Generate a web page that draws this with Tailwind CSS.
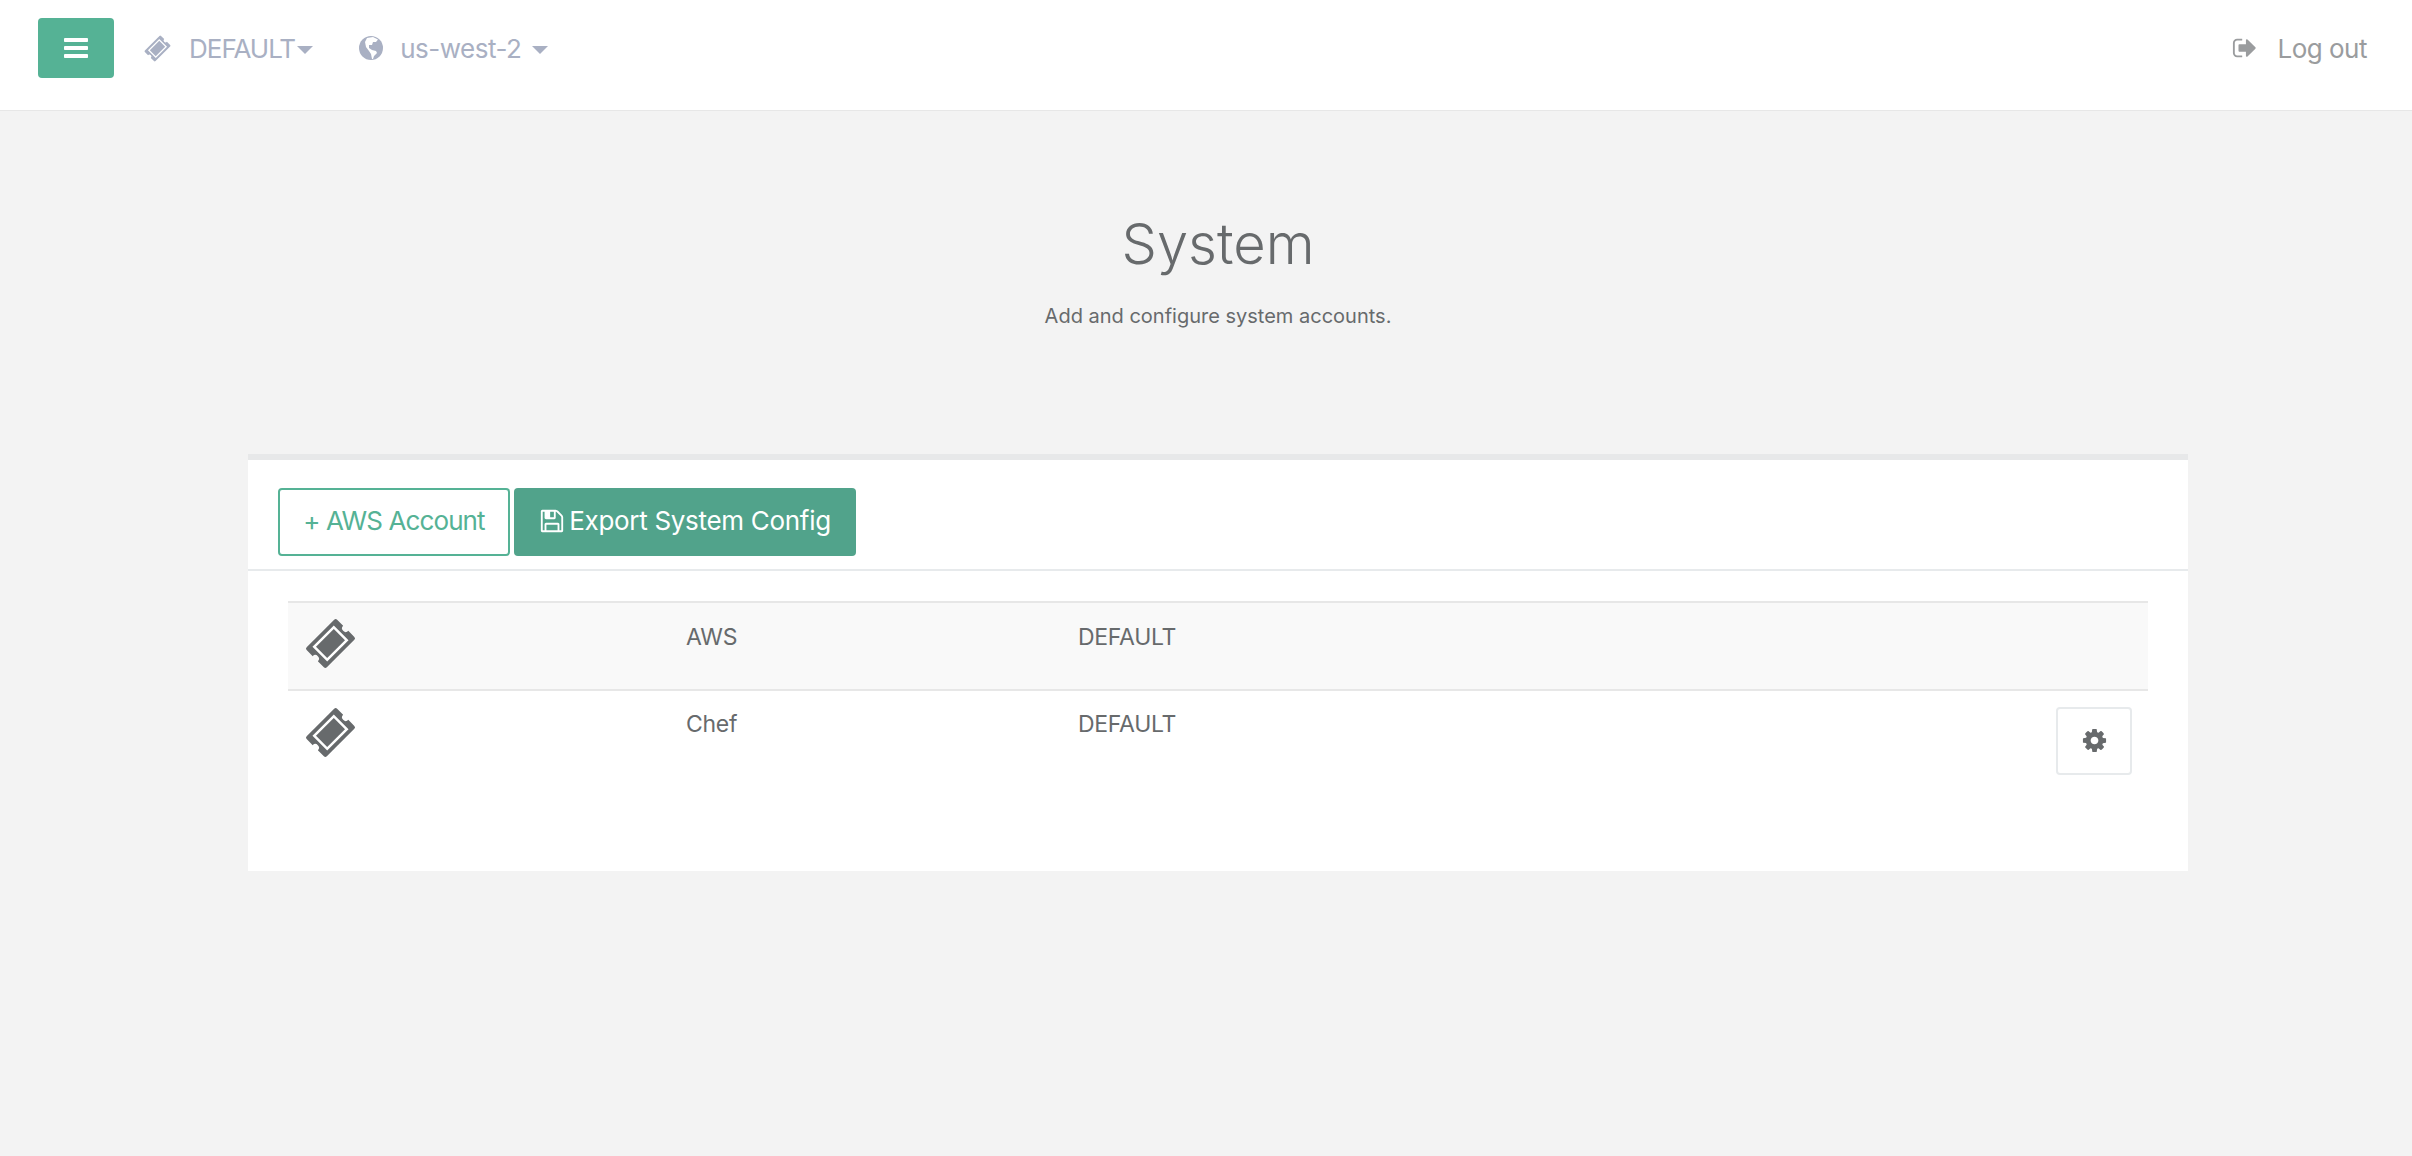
<!DOCTYPE html>
<html lang="en">
  <head>
    <meta charset="UTF-8" />
    <title>System</title>
    <script src="https://cdn.jsdelivr.net/npm/@tailwindcss/browser@4"></script>
  </head>
  <body class="bg-[#f3f3f3] min-h-screen font-['Inter',sans-serif] text-[#676a6c]">
    <!-- top nav -->
    <nav class="h-[111px] bg-white border-b border-[#e7e7e7] flex items-center justify-between pl-[38px] pr-[45px] pb-[14px]">
      <div class="flex items-center text-[#a9b0c3] text-[26px] tracking-[-0.5px]">
        <button class="w-[76px] h-[60px] rounded-[4px] bg-[#55b295] flex items-center justify-center">
          <svg class="w-[24px] h-[20px]" viewBox="128 256 1536 1280" preserveAspectRatio="none" fill="#fff"><path d="M1664 1344v128q0 26-19 45t-45 19h-1408q-26 0-45-19t-19-45v-128q0-26 19-45t45-19h1408q26 0 45 19t19 45zm0-512v128q0 26-19 45t-45 19h-1408q-26 0-45-19t-19-45v-128q0-26 19-45t45-19h1408q26 0 45 19t19 45zm0-512v128q0 26-19 45t-45 19h-1408q-26 0-45-19t-19-45v-128q0-26 19-45t45-19h1408q26 0 45 19t19 45z"/></svg>
        </button>
        <svg class="w-[27px] h-[27px] ml-[30px]" viewBox="0 0 49 49">
          <g transform="rotate(-45 24.5 24.5)">
            <path fill="#a9b0c3" d="M5.8 10.8h37.4a2 2 0 0 1 2 2v8.2a3.5 3.5 0 0 0 0 7v8.2a2 2 0 0 1-2 2H5.8a2 2 0 0 1-2-2V28a3.5 3.5 0 0 0 0-7v-8.2a2 2 0 0 1 2-2z"/>
            <rect x="11.2" y="15.7" width="26.6" height="17.6" fill="none" stroke="#fff" stroke-width="2.4"/>
          </g>
        </svg>
        <span class="ml-[18px] tracking-[-1px]">DEFAULT</span>
        <span class="ml-[2px] mt-[3px] border-x-[8px] border-x-transparent border-t-[8px] border-t-[#a9b0c3]"></span>
        <svg class="w-[24px] h-[24px] ml-[46px]" viewBox="0 0 24 24"><circle cx="12" cy="12" r="12" fill="#a9b0c3"/><path d="M8 2l6-1 5 2.5-2 2.5-3 0-1 3-3 0 0 3 3 2 4 1 1 2-3 3-1 3-1 0-1-5-2-3-3-4-1-5z" fill="#fff"/></svg>
        <span class="ml-[17px]">us-west-2</span>
        <span class="ml-[11px] mt-[3px] border-x-[8px] border-x-transparent border-t-[8px] border-t-[#a9b0c3]"></span>
      </div>
      <a class="flex items-center text-[#9a9c9e] text-[26px] tracking-[-0.5px]">
        <svg class="w-[26px] h-[26px] mr-[19px]" viewBox="0 0 1792 1792" fill="#9a9c9e"><path d="M704 1440q0 4 1 20t.5 26.5-3 23.5-10 19.5-20.5 6.5h-320q-119 0-203.5-84.5t-84.5-203.5v-704q0-119 84.5-203.5t203.5-84.5h320q13 0 22.5 9.5t9.5 22.5q0 4 1 20t.5 26.5-3 23.5-10 19.5-20.5 6.5h-320q-66 0-113 47t-47 113v704q0 66 47 113t113 47h312l11.5 1 11.5 3 8 5.5 7 9 2 13.5zm928-544q0 26-19 45l-544 544q-19 19-45 19t-45-19-19-45v-288h-448q-26 0-45-19t-19-45v-384q0-26 19-45t45-19h448v-288q0-26 19-45t45-19 45 19l544 544q19 19 19 45z"/></svg>
        Log out
      </a>
    </nav>

    <!-- heading -->
    <header class="ml-[248px] w-[1940px] h-[343px] pt-[98px] text-center">
      <h1 class="text-[56px] leading-[70px] font-light">System</h1>
      <p class="mt-[23px] text-[20px] leading-[28px]">Add and configure system accounts.</p>
    </header>

    <!-- panel -->
    <section class="ml-[248px] w-[1940px] h-[417px] bg-white border-t-[6px] border-[#e7e8e9]">
      <div class="h-[111px] border-b-2 border-[#e7eaec] pt-[28px] pl-[30px] flex items-start text-[26px] tracking-[-0.3px]">
        <button class="w-[232px] h-[68px] pb-[3px] rounded-[4px] border-2 border-[#55b295] text-[#55b295] bg-white tracking-[-0.9px]">+ AWS Account</button>
        <button class="ml-[4px] w-[342px] h-[68px] pb-[3px] rounded-[4px] bg-[#51a38b] text-white flex items-center justify-center">
          <svg class="w-[26px] h-[26px] mr-[4px]" viewBox="0 0 1792 1792" fill="#fff"><path d="M512 1536h768v-384h-768v384zm896 0h128v-896q0-14-10-38.5t-20-34.5l-281-281q-10-10-34-20t-39-10v416q0 40-28 68t-68 28h-576q-40 0-68-28t-28-68v-416h-128v1280h128v-416q0-40 28-68t68-28h832q40 0 68 28t28 68v416zm-384-928v-320q0-13-9.5-22.5t-22.5-9.5h-192q-13 0-22.5 9.5t-9.5 22.5v320q0 13 9.5 22.5t22.5 9.5h192q13 0 22.5-9.5t9.5-22.5zm640 32v928q0 40-28 68t-68 28h-1344q-40 0-68-28t-28-68v-1344q0-40 28-68t68-28h928q40 0 88 20t76 48l280 280q28 28 48 76t20 88z"/></svg>
          Export System Config
        </button>
      </div>
      <div class="mt-[30px] mx-[40px] text-[23px] tracking-[-0.3px] leading-[32px]">
        <div class="h-[90px] bg-[#f9f9f9] border-y-2 border-[#e7e7e7] grid grid-cols-[381px_392px_1fr] pl-[17px]">
          <svg class="w-[51px] h-[51px] mt-[15px]" viewBox="0 0 49 49">
            <g transform="rotate(-45 24.5 24.5)">
              <path fill="#676a6c" d="M5.8 10.8h37.4a2 2 0 0 1 2 2v8.2a3.5 3.5 0 0 0 0 7v8.2a2 2 0 0 1-2 2H5.8a2 2 0 0 1-2-2V28a3.5 3.5 0 0 0 0-7v-8.2a2 2 0 0 1 2-2z"/>
              <rect x="11.2" y="15.7" width="26.6" height="17.6" fill="none" stroke="#fff" stroke-width="2.4"/>
            </g>
          </svg>
          <span class="pt-[18px]">AWS</span>
          <span class="pt-[18px]">DEFAULT</span>
        </div>
        <div class="flex pl-[17px]">
          <div class="grid grid-cols-[381px_392px_1fr] flex-1">
            <svg class="w-[51px] h-[51px] mt-[16px]" viewBox="0 0 49 49">
              <g transform="rotate(-45 24.5 24.5)">
                <path fill="#676a6c" d="M5.8 10.8h37.4a2 2 0 0 1 2 2v8.2a3.5 3.5 0 0 0 0 7v8.2a2 2 0 0 1-2 2H5.8a2 2 0 0 1-2-2V28a3.5 3.5 0 0 0 0-7v-8.2a2 2 0 0 1 2-2z"/>
                <rect x="11.2" y="15.7" width="26.6" height="17.6" fill="none" stroke="#fff" stroke-width="2.4"/>
              </g>
            </svg>
            <span class="pt-[17px]">Chef</span>
            <span class="pt-[17px]">DEFAULT</span>
          </div>
          <button class="mt-[16px] mr-[16px] w-[76px] h-[68px] rounded-[4px] border-2 border-[#e7eaec] bg-white flex items-center justify-center pb-[2px]">
            <svg class="w-[27px] h-[27px]" viewBox="0 0 1792 1792" fill="#676a6c"><path d="M1152 896q0-106-75-181t-181-75-181 75-75 181 75 181 181 75 181-75 75-181zm512-109v222q0 12-8 23t-20 13l-185 28q-19 54-39 91 35 50 107 138 10 12 10 25t-9 23q-27 37-99 108t-94 71q-12 0-26-9l-138-108q-44 23-91 38-16 136-29 186-7 28-36 28h-222q-14 0-24.5-8.5t-11.5-21.5l-28-184q-49-16-90-37l-141 107q-10 9-25 9-14 0-25-11-126-114-165-168-7-10-7-23 0-12 8-23 15-21 51-66.5t54-70.5q-27-50-41-99l-183-27q-13-2-21-12.5t-8-23.5v-222q0-12 8-23t19-13l186-28q14-46 39-92-40-57-107-138-10-12-10-24 0-10 9-23 26-36 98.5-107.5t94.5-71.5q13 0 26 10l138 107q44-23 91-38 16-136 29-186 7-28 36-28h222q14 0 24.5 8.5t11.5 21.5l28 184q49 16 90 37l142-107q9-9 24-9 13 0 25 10 129 119 165 170 7 8 7 22 0 12-8 23-15 21-51 66.5t-54 70.5q26 50 41 98l183 28q13 2 21 12.5t8 23.5z"/></svg>
          </button>
        </div>
      </div>
    </section>
  </body>
</html>
